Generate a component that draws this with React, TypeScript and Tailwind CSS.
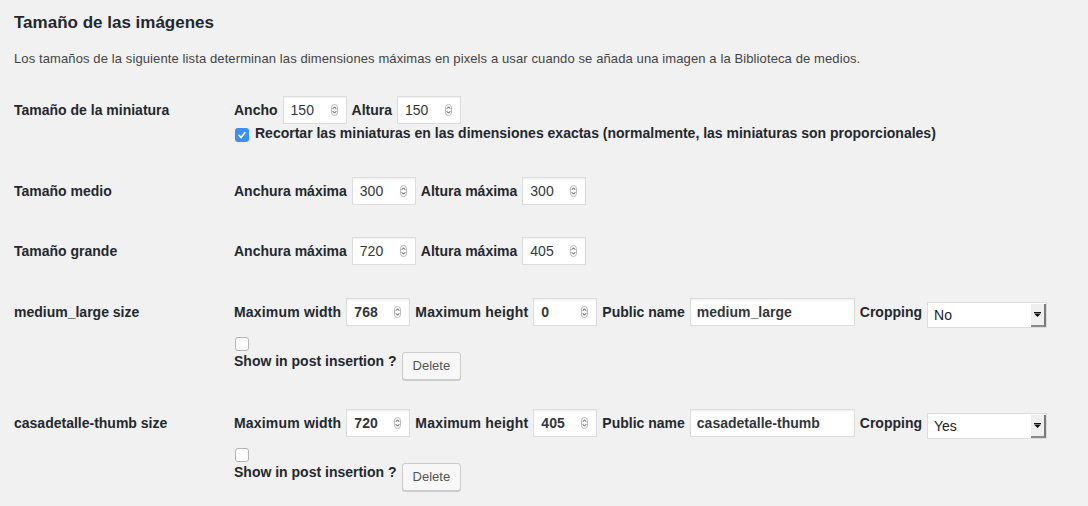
import React from "react";

const font = { fontFamily: '"Liberation Sans", Arial, Helvetica, sans-serif' };

function Spinner() {
  return (
    <svg width="7" height="12" viewBox="0 0 7 12" className="absolute right-[8px] top-1/2 -translate-y-1/2">
      <rect x="0.5" y="0.5" width="6" height="11" rx="3" fill="#fbfbfb" stroke="#a8a8a8" strokeWidth="0.8" />
      <path d="M1.8 4.8 L3.5 2.8 L5.2 4.8" fill="none" stroke="#444" strokeWidth="0.9" />
      <path d="M1.8 7.2 L3.5 9.2 L5.2 7.2" fill="none" stroke="#444" strokeWidth="0.9" />
    </svg>
  );
}

function NumInput({ value, w, bold }: { value: string; w: string; bold?: boolean }) {
  return (
    <div
      className={`relative h-[28px] ${w} bg-white border border-[#ddd] shadow-[inset_0_1px_2px_rgba(0,0,0,0.07)] pl-[7px] flex items-center text-[14px] text-[#32373c] ${bold ? "font-semibold" : ""}`}
    >
      {value}
      <Spinner />
    </div>
  );
}

function TextInput({ value }: { value: string }) {
  return (
    <div className="h-[28px] w-[165px] bg-white border border-[#ddd] shadow-[inset_0_1px_2px_rgba(0,0,0,0.07)] pl-[6px] flex items-center text-[14px] font-semibold text-[#32373c]">
      {value}
    </div>
  );
}

function Select({ value }: { value: string }) {
  return (
    <div className="mt-[4px] -mb-[2px] h-[26px] w-[120px] bg-white border border-[#ddd] flex items-stretch">
      <div className="flex-1 pl-[6px] flex items-center text-[14px] text-[#222]">{value}</div>
      <div className="w-[15px] bg-[#efefef] border-r-2 border-b-2 border-r-[#7a7a7a] border-b-[#8a8a8a] flex items-center justify-center mt-[1px]">
        <svg width="7" height="5" viewBox="0 0 7 5">
          <rect x="0" y="0" width="7" height="1" fill="#111" />
          <path d="M0 1.5 L7 1.5 L3.5 5 Z" fill="#111" />
        </svg>
      </div>
    </div>
  );
}

function Label({ children, wide }: { children: React.ReactNode; wide?: boolean }) {
  return (
    <span className={`leading-[28px] text-[14px] font-bold text-[#23282d] whitespace-nowrap ${wide ? "tracking-[0.18px]" : ""}`}>
      {children}
    </span>
  );
}

function Checkbox({ checked }: { checked?: boolean }) {
  if (checked) {
    return (
      <div className="w-[14px] h-[14px] rounded-[3px] bg-[#3b8ff5] flex items-center justify-center">
        <svg width="10" height="10" viewBox="0 0 10 10">
          <path d="M2 5.3 L4.2 7.6 L8 2.6" fill="none" stroke="white" strokeWidth="1.6" strokeLinecap="round" strokeLinejoin="round" />
        </svg>
      </div>
    );
  }
  return <div className="w-[14px] h-[14px] rounded-[3px] bg-white border border-[#b5b5b5]" />;
}

function DeleteButton() {
  return (
    <div className="h-[28px] px-[10px] flex items-center bg-[#f7f7f7] border border-[#ccc] rounded-[3px] shadow-[0_1px_0_#ccc] text-[13px] text-[#555]">
      Delete
    </div>
  );
}

function RowLabel({ children }: { children: React.ReactNode }) {
  return (
    <div className="w-[220px] shrink-0 leading-[28px] text-[14px] font-bold text-[#23282d] whitespace-nowrap">{children}</div>
  );
}

function CustomRow({
  name,
  w,
  h,
  pub,
  crop,
}: {
  name: string;
  w: string;
  h: string;
  pub: string;
  crop: string;
}) {
  return (
    <div className="flex">
      <RowLabel>{name}</RowLabel>
      <div className="flex flex-col">
        <div className="flex items-start gap-[5px]">
          <Label wide>Maximum width</Label>
          <NumInput value={w} w="w-[64px]" bold />
          <Label wide>Maximum height</Label>
          <NumInput value={h} w="w-[64px]" bold />
          <Label>Public name</Label>
          <TextInput value={pub} />
          <Label>Cropping</Label>
          <Select value={crop} />
        </div>
        <div className="mt-[11px] ml-[1px]">
          <Checkbox />
        </div>
        <div className="mt-[1px] flex items-start gap-[5px]">
          <span className="leading-[18px] text-[14px] font-bold text-[#23282d]">Show in post insertion ?</span>
          <DeleteButton />
        </div>
      </div>
    </div>
  );
}

export default function App() {
  return (
    <div className="w-[1088px] h-[506px] bg-[#f1f1f1] pl-[14px] overflow-hidden" style={font}>
      <div className="pt-[11px] leading-[24px] text-[17px] font-bold text-[#23282d]">Tamaño de las imágenes</div>
      <p className="mt-[14px] leading-[20px] text-[13px] tracking-[0.11px] text-[#444]">
        Los tamaños de la siguiente lista determinan las dimensiones máximas en pixels a usar cuando se añada una imagen a la Biblioteca de medios.
      </p>

      {/* Row 1 */}
      <div className="mt-[27px] flex">
        <RowLabel>Tamaño de la miniatura</RowLabel>
        <div className="flex flex-col">
          <div className="flex items-start gap-[5px]">
            <Label>Ancho</Label>
            <NumInput value="150" w="w-[64px]" />
            <Label>Altura</Label>
            <NumInput value="150" w="w-[64px]" />
          </div>
          <div className="flex items-start gap-[6px]">
            <div className="mt-[4px] ml-[1px]">
              <Checkbox checked />
            </div>
            <span className="leading-[18px] text-[14px] font-bold text-[#23282d]">
              Recortar las miniaturas en las dimensiones exactas (normalmente, las miniaturas son proporcionales)
            </span>
          </div>
        </div>
      </div>

      {/* Row 2 */}
      <div className="mt-[35px] flex">
        <RowLabel>Tamaño medio</RowLabel>
        <div className="flex items-start gap-[5px]">
          <Label>Anchura máxima</Label>
          <NumInput value="300" w="w-[64px]" />
          <Label>Altura máxima</Label>
          <NumInput value="300" w="w-[64px]" />
        </div>
      </div>

      {/* Row 3 */}
      <div className="mt-[32px] flex">
        <RowLabel>Tamaño grande</RowLabel>
        <div className="flex items-start gap-[5px]">
          <Label>Anchura máxima</Label>
          <NumInput value="720" w="w-[64px]" />
          <Label>Altura máxima</Label>
          <NumInput value="405" w="w-[64px]" />
        </div>
      </div>

      <div className="mt-[33px]">
        <CustomRow name="medium_large size" w="768" h="0" pub="medium_large" crop="No" />
      </div>
      <div className="mt-[29px]">
        <CustomRow name="casadetalle-thumb size" w="720" h="405" pub="casadetalle-thumb" crop="Yes" />
      </div>
    </div>
  );
}
